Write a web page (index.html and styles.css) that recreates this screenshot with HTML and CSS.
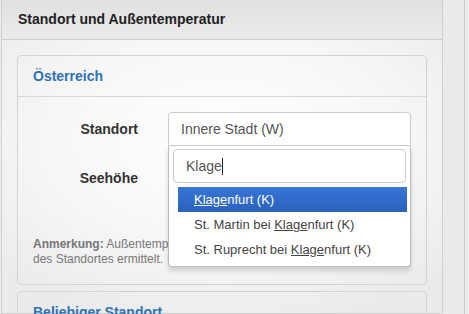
FILE: index.html
```html
<html>
<head>
  <meta charset="utf-8">
  <link rel="stylesheet" href="styles.css">
</head>
<body>
  <div class="page">
    <div class="panel outer">
      <div class="outer-heading">Standort und Außentemperatur</div>
      <div class="outer-body">
        <div class="panel inner">
          <div class="inner-heading">Österreich</div>
          <div class="inner-body">
            <div class="form-row">
              <label>Standort</label>
              <div class="chosen">
                <div class="chosen-single">Innere Stadt (W)</div>
                <div class="chosen-drop">
                  <div class="chosen-search">
                    <div class="search-box">Klage<span class="caret"></span></div>
                  </div>
                  <ul class="chosen-results">
                    <li class="active"><em>Klage</em>nfurt (K)</li>
                    <li>St. Martin bei <em>Klage</em>nfurt (K)</li>
                    <li>St. Ruprecht bei <em>Klage</em>nfurt (K)</li>
                  </ul>
                </div>
              </div>
            </div>
            <div class="form-row">
              <label>Seehöhe</label>
              <div class="text-input">171 m</div>
            </div>
            <p class="note"><b>Anmerkung:</b> Außentemperatur und Seehöhe werden anhand<br>des Standortes ermittelt.</p>
          </div>
        </div>
        <div class="panel inner">
          <div class="inner-heading">Beliebiger Standort</div>
          <div class="inner-body"></div>
        </div>
      </div>
    </div>
    <div class="side"></div>
  </div>
</body>
</html>
```

FILE: styles.css
```css
html, body {
  margin: 0;
  padding: 0;
  overflow: hidden;
}

body {
  font-family: "Liberation Sans", Arial, sans-serif;
  font-size: 14px;
  color: #333;
  background-color: #ececec;
}

.page {
  display: flex;
  height: 314px;
}

.outer {
  width: 440px;
  margin-left: 1px;
  border: 1px solid #cfcfcf;
  border-top: none;
  flex-shrink: 0;
  background: radial-gradient(ellipse 70% 60% at 50% 45%, #ffffff 0%, #f7f7f7 55%, #ebebeb 100%);
}

.outer-heading {
  height: 39px;
  line-height: 39px;
  padding: 0 16px;
  font-weight: bold;
  color: #222;
  background: linear-gradient(to bottom, #e0e0e0, #ebebeb);
  border-bottom: 1px solid #cfcfcf;
}

.outer-body {
  padding: 15px;
}

.inner {
  border: 1px solid #d2d2d2;
  border-radius: 4px;
  margin-bottom: 6px;
}

.inner-heading {
  height: 40px;
  line-height: 40px;
  padding: 0 15px;
  font-weight: bold;
  color: #2f72b5;
  border-bottom: 1px solid #d8d8d8;
}

.inner-body {
  padding: 15px;
}

.form-row {
  display: grid;
  grid-template-columns: 105px 1fr;
  column-gap: 30px;
  margin-bottom: 15px;
}

.form-row label {
  text-align: right;
  font-weight: bold;
  padding-top: 7px;
  line-height: 20px;
}

.chosen {
  position: relative;
}

.chosen-single, .text-input {
  height: 34px;
  box-sizing: border-box;
  border: 1px solid #cccccc;
  border-radius: 4px;
  padding: 0 12px;
  line-height: 32px;
  color: #555;
  background: #fff;
}

.chosen-single {
  border-radius: 4px 4px 0 0;
}

.chosen-drop {
  position: absolute;
  top: 34px;
  left: 0;
  right: 0;
  z-index: 10;
  background: #fff;
  border: 1px solid #bdbdbd;
  border-top: none;
  border-radius: 0 0 4px 4px;
  box-shadow: 0 4px 5px rgba(0, 0, 0, 0.15);
}

.chosen-search {
  padding: 3px 4px 0 4px;
}

.search-box {
  height: 34px;
  box-sizing: border-box;
  border: 1px solid #cccccc;
  border-radius: 4px;
  padding: 0 12px;
  line-height: 32px;
  color: #555;
}

.caret {
  display: inline-block;
  width: 1px;
  height: 17px;
  background: #222;
  vertical-align: -4px;
}

.chosen-results {
  list-style: none;
  margin: 4px 3px 4px 9px;
  padding: 0;
}

.chosen-results li {
  font-size: 13px;
  line-height: 15px;
  padding: 5px 6px 5px 16px;
  color: #444;
}

.chosen-results em {
  font-style: normal;
  text-decoration: underline;
}

.chosen-results li.active {
  color: #fff;
  background: linear-gradient(to bottom, #3875d7, #2a62bc);
}

.note {
  margin: 42px 0 2px 0;
  font-size: 12px;
  line-height: 15px;
  color: #777;
}

.side {
  width: 21px;
  border-right: 1px solid #cacaca;
  background: #eaeaea;
}
```
